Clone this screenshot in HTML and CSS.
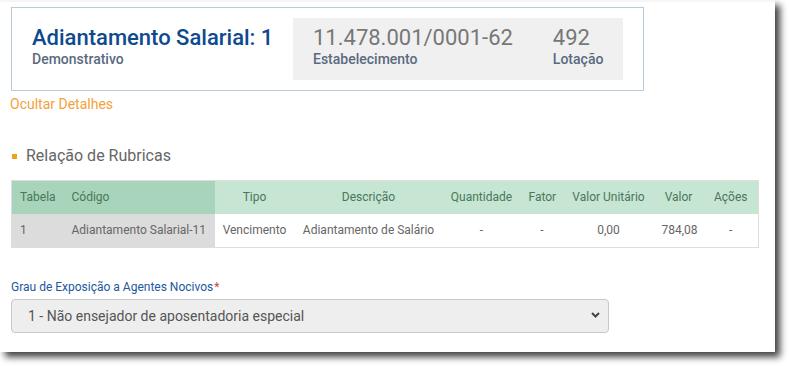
FILE: index.html
```html
<!DOCTYPE html>
<html lang="pt-BR">
<head>
<meta charset="utf-8">
<title>Adiantamento Salarial</title>
<link rel="stylesheet" href="styles.css">
</head>
<body>
<div class="page">
<div class="panel">
  <div class="summary">
    <div class="title-block">
      <div class="title">Adiantamento Salarial: 1</div>
      <div class="caption">Demonstrativo</div>
    </div>
    <div class="info-box">
      <div class="info">
        <div class="info-value">11.478.001/0001-62</div>
        <div class="caption">Estabelecimento</div>
      </div>
      <div class="info">
        <div class="info-value">492</div>
        <div class="caption">Lotação</div>
      </div>
    </div>
  </div>
  <a class="toggle">Ocultar Detalhes</a>
  <h2 class="section-title"><span class="bullet"></span>Relação de Rubricas</h2>
  <table class="grid">
    <colgroup>
      <col class="c-tabela"><col class="c-codigo"><col class="c-tipo"><col class="c-desc"><col class="c-qtd"><col class="c-fator"><col class="c-unit"><col class="c-valor"><col class="c-acoes">
    </colgroup>
    <thead>
      <tr>
        <th class="key left">Tabela</th>
        <th class="key left">Código</th>
        <th>Tipo</th>
        <th>Descrição</th>
        <th>Quantidade</th>
        <th>Fator</th>
        <th>Valor Unitário</th>
        <th>Valor</th>
        <th>Ações</th>
      </tr>
    </thead>
    <tbody>
      <tr>
        <td class="key left">1</td>
        <td class="key left">Adiantamento Salarial-11</td>
        <td>Vencimento</td>
        <td>Adiantamento de Salário</td>
        <td>-</td>
        <td>-</td>
        <td>0,00</td>
        <td>784,08</td>
        <td>-</td>
      </tr>
    </tbody>
  </table>
  <label class="field-label">Grau de Exposição a Agentes Nocivos<span class="req">*</span></label>
  <div class="select-wrap">
    <div class="select">1 - Não ensejador de aposentadoria especial</div>
    <svg class="chevron" width="9" height="6" viewBox="0 0 9 6"><path d="M1 1 L4.5 4.5 L8 1" fill="none" stroke="#444" stroke-width="2"/></svg>
  </div>
</div>
</div>
</body>
</html>
```

FILE: styles.css
```css
* { box-sizing: border-box; }
html, body { margin: 0; padding: 0; background: #fff; }
body { font-family: Roboto, "Noto Sans", Arial, sans-serif; }

.page {
  width: 789px;
  height: 366px;
  overflow: hidden;
}

.panel {
  width: 775px;
  height: 352px;
  background: #fff;
  border-top: 2px solid #f6f6f6;
  padding: 5px 0 0 11px;
  box-shadow: 5px 5px 7px rgba(0, 0, 0, 0.75);
}

.summary {
  width: 633px;
  height: 84px;
  border: 1px solid #b9cbd6;
  padding: 10px 20px;
  display: flex;
  justify-content: space-between;
  align-items: flex-start;
}

.title-block { padding-top: 7px; white-space: nowrap; }
.title {
  font-size: 22px;
  line-height: 26px;
  font-weight: 500;
  color: #0e4a8e;
}
.caption {
  font-size: 14px;
  line-height: 16px;
  font-weight: 500;
  color: #5a6a80;
}

.info-box {
  width: 330px;
  height: 62px;
  flex-shrink: 0;
  background: #f0f0f0;
  padding: 7px 19px 0 20px;
  display: flex;
  gap: 40px;
  white-space: nowrap;
}
.info { flex-shrink: 0; }
.info-value {
  font-size: 22px;
  line-height: 26px;
  color: #777;
}

.toggle {
  display: block;
  margin: 3px 0 0 -1px;
  font-size: 14px;
  line-height: 20px;
  color: #f5a13a;
  cursor: pointer;
}

.section-title {
  margin: 31px 0 0;
  display: flex;
  align-items: center;
  font-size: 16px;
  line-height: 22px;
  font-weight: 400;
  color: #666;
}
.bullet {
  width: 5px;
  height: 5px;
  background: #f0a21e;
  margin: 1px 9px 0 1px;
}

.grid {
  margin-top: 13px;
  width: 747px;
  border-collapse: collapse;
  table-layout: fixed;
  font-size: 12px;
  border: 1px solid #dedede;
}
.c-tabela { width: 52px; }
.c-codigo { width: 151px; }
.c-tipo { width: 80px; }
.c-desc { width: 148px; }
.c-qtd { width: 78px; }
.c-fator { width: 43px; }
.c-unit { width: 90px; }
.c-valor { width: 50px; }
.c-acoes { width: 55px; }

.grid th, .grid td {
  padding: 0 8px;
  text-align: center;
  white-space: nowrap;
  font-weight: 400;
}
.grid th {
  height: 33px;
  background: #c6e5d3;
  color: #4a7759;
}
.grid th.key { background: #a8d4bb; }
.grid td {
  height: 34px;
  background: #fff;
  color: #666;
}
.grid td.key { background: #dcdcdc; }
.grid .left { text-align: left; }

.field-label {
  display: block;
  margin-top: 31px;
  font-size: 12px;
  line-height: 16px;
  color: #22589e;
}
.req { color: #d0453f; margin-left: 1px; }

.select-wrap {
  position: relative;
  width: 598px;
  margin-top: 4px;
}
.select {
  height: 34px;
  background: #eeeeee;
  border: 1px solid #c8c8c8;
  border-radius: 4px;
  padding: 0 16px;
  font-size: 14px;
  line-height: 32px;
  color: #555;
}
.chevron {
  position: absolute;
  right: 9px;
  top: 13px;
}
```
